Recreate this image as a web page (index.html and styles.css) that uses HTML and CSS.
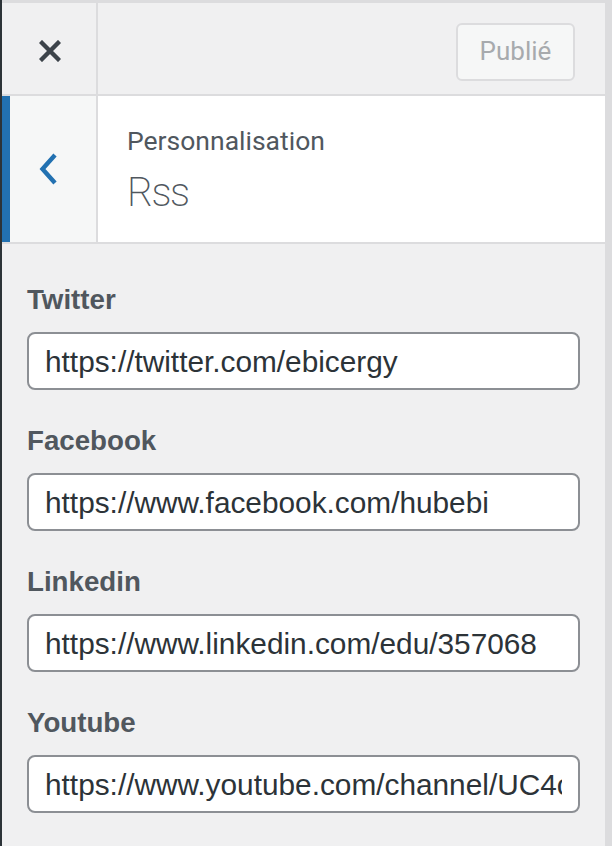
FILE: index.html
```html
<!DOCTYPE html>
<html lang="fr">
<head>
<meta charset="utf-8">
<title>Personnalisation – Rss</title>
<link rel="stylesheet" href="styles.css">
</head>
<body>
<div class="frame">
  <div class="edge-left"></div>
  <div class="panel">
    <header class="topbar">
      <button class="close" type="button" aria-label="Fermer">
        <svg width="22" height="22" viewBox="0 0 22 22" aria-hidden="true">
          <path d="M3 3 L19 19 M19 3 L3 19" stroke="#3c434a" stroke-width="4.4" stroke-linecap="square" fill="none"/>
        </svg>
      </button>
      <div class="actions">
        <button class="publish" type="button" disabled>Publié</button>
      </div>
    </header>
    <div class="section-head">
      <button class="back" type="button" aria-label="Retour">
        <svg width="20" height="34" viewBox="0 0 20 34" aria-hidden="true">
          <path d="M16 3 L3.5 17 L16 31" stroke="#2271b1" stroke-width="4.4" stroke-linejoin="miter" stroke-linecap="butt" fill="none"/>
        </svg>
      </button>
      <div class="titles">
        <span class="crumb">Personnalisation</span>
        <h3 class="title">Rss</h3>
      </div>
    </div>
    <ul class="controls">
      <li class="control">
        <label class="control-title" for="f-twitter">Twitter</label>
        <input class="field" id="f-twitter" type="text" value="https://twitter.com/ebicergy">
      </li>
      <li class="control">
        <label class="control-title" for="f-facebook">Facebook</label>
        <input class="field" id="f-facebook" type="text" value="https://www.facebook.com/hubebi">
      </li>
      <li class="control">
        <label class="control-title" for="f-linkedin">Linkedin</label>
        <input class="field" id="f-linkedin" type="text" value="https://www.linkedin.com/edu/357068">
      </li>
      <li class="control">
        <label class="control-title" for="f-youtube">Youtube</label>
        <input class="field" id="f-youtube" type="text" value="https://www.youtube.com/channel/UC4c">
      </li>
    </ul>
  </div>
  <div class="edge-right"></div>
</div>
</body>
</html>
```

FILE: styles.css
```css
html, body {
  margin: 0;
  padding: 0;
  background: #f0f0f1;
}

.frame {
  display: flex;
  height: 846px;
  overflow: hidden;
}

.edge-left {
  width: 2px;
  flex: 0 0 2px;
  background: #2c3338;
}

.edge-right {
  width: 7px;
  flex: 0 0 7px;
  background: #dcdcde;
}

.panel {
  flex: 1;
  min-width: 0;
  border-top: 3px solid #dcdcde;
  background: #f0f0f1;
}

/* top bar */
.topbar {
  display: flex;
  height: 91px;
  border-bottom: 2px solid #dcdcde;
  background: #f0f0f1;
}

.close {
  width: 96px;
  flex: 0 0 96px;
  box-sizing: border-box;
  margin: 0;
  padding: 5px 0 0 1px;
  border: none;
  border-right: 2px solid #dcdcde;
  background: transparent;
  display: flex;
  align-items: center;
  justify-content: center;
}

.actions {
  flex: 1;
  display: flex;
  justify-content: flex-end;
  align-items: flex-start;
  padding: 20px 30px 0 0;
}

.publish {
  width: 119px;
  height: 58px;
  box-sizing: border-box;
  margin: 0;
  padding: 0 0 2px;
  border: 2px solid #dcdcde;
  border-radius: 6px;
  background: #f6f7f7;
  color: #a7aaad;
  font: 400 26px/1 Roboto, "Liberation Sans", sans-serif;
}

/* section header */
.section-head {
  display: flex;
  height: 146px;
  background: #fff;
  border-bottom: 2px solid #dcdcde;
}

.back {
  width: 96px;
  flex: 0 0 96px;
  box-sizing: border-box;
  margin: 0;
  padding: 0 9px 0 0;
  border: none;
  border-left: 8px solid #2271b1;
  border-right: 2px solid #dcdcde;
  background: #f6f7f7;
  display: flex;
  align-items: center;
  justify-content: center;
}

.titles {
  padding: 27px 0 0 29px;
}

.crumb {
  display: block;
  font: 400 26.5px/36px Roboto, "Liberation Sans", sans-serif;
  color: #50575e;
}

.title {
  margin: 8px 0 0;
  font: 200 40px/52px Roboto, "Liberation Sans", sans-serif;
  letter-spacing: -1.5px;
  color: #50575e;
}

/* controls */
.controls {
  list-style: none;
  margin: 0;
  padding: 38px 25px 0;
}

.control {
  margin: 0 0 33px;
}

.control-title {
  display: block;
  margin: 0 0 14px;
  font: 700 27.7px/36px "Liberation Sans", Arial, sans-serif;
  color: #50575e;
}

.field {
  display: block;
  width: 100%;
  height: 58px;
  box-sizing: border-box;
  margin: 0;
  padding: 1px 16px 0;
  border: 2px solid #8c8f94;
  border-radius: 8px;
  background: #fff;
  color: #2c3338;
  font: 400 29.8px "Liberation Sans", Arial, sans-serif;
  outline: none;
}
```
